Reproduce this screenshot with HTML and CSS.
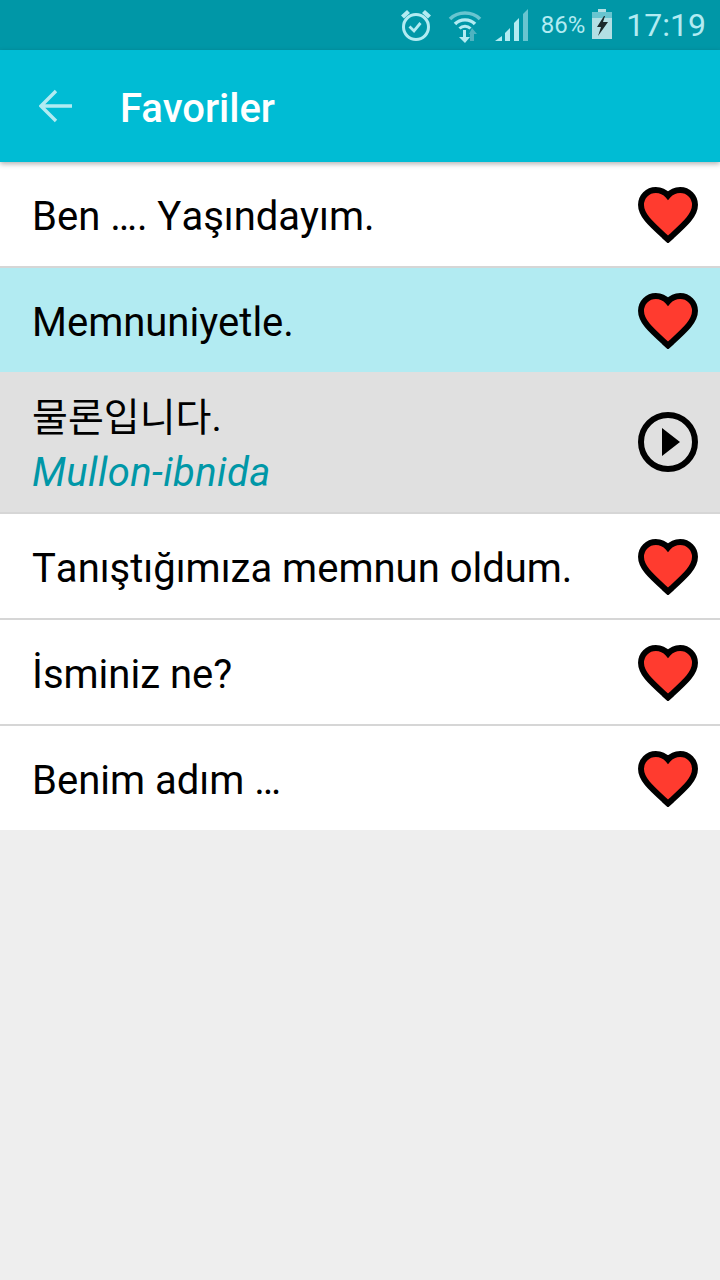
FILE: index.html
```html
<!DOCTYPE html>
<html lang="tr">
<head>
<meta charset="utf-8">
<title>Favoriler</title>
<link rel="stylesheet" href="styles.css">
</head>
<body>
<svg class="defs" width="0" height="0" aria-hidden="true">
  <symbol id="heart" viewBox="0.9 1.9 22.2 20.74"><path d="M12 21.35l-1.45-1.32C5.4 15.36 2 12.28 2 8.500 2 5.420 4.420 3 7.500 3c1.740 0 3.410.81 4.500 2.090C13.090 3.810 14.760 3 16.500 3 19.580 3 22 5.420 22 8.500c0 3.780-3.400 6.860-8.550 11.540L12 21.350z" fill="#ff3b2f" stroke="#000" stroke-width="2.200"/></symbol>
</svg>
<div class="status">
  <svg class="ic-alarm" width="32" height="32" viewBox="0 0 32 32" fill="none" stroke="#b2ebf2" stroke-width="3"><circle cx="16" cy="18" r="12.500"/><path d="M9.500 17.500l4.500 4.500 6.500-8" stroke-width="2.800"/><path d="M2.500 8L8.500 2.500M29.500 8L23.500 2.500" stroke-width="4.400"/></svg>
  <svg class="ic-wifi" width="34" height="36" viewBox="0 0 34 36" fill="none"><path d="M2 12C10 4 24 4 32 12" stroke="#68c5d0" stroke-width="3.600"/><path d="M7 17C12 11.500 22 11.500 27 17" stroke="#b2ebf2" stroke-width="3.400"/><path d="M11.500 21.500C14.500 18.500 19.500 18.500 22.500 21.500" stroke="#b2ebf2" stroke-width="3"/><path d="M15 23v7h-4l6 6 5-6h-4v-7z" fill="#b2ebf2"/><path d="M24 21l5 6h-3v7h-4v-7h-1z" fill="#4fb3c0"/></svg>
  <svg class="ic-signal" width="34" height="34" viewBox="0 0 34 34"><path d="M0 33l7-5v5z" fill="#b2ebf2"/><path d="M10 33v-8l5-5v13z" fill="#b2ebf2"/><path d="M19 33V15l5-5v23z" fill="#b2ebf2"/><path d="M28 33V6l5-5v32z" fill="#68c5d0"/></svg>
  <span class="pct">86%</span>
  <svg class="ic-batt" width="20" height="30" viewBox="0 0 20 30"><path d="M6 0h8v3h6v27H0V3h6z" fill="#b2dfe4"/><path d="M0 3h20v6H0z" fill="#68c5d0"/><path d="M12 7L5 18h4l-3 9 10-14h-5l2-6z" fill="#1c2a2c"/></svg>
  <span class="time">17:19</span>
</div>
<header class="bar">
  <svg class="back" width="34" height="34" viewBox="0 0 34 34" fill="none" stroke="#b2ebf2" stroke-width="3.400"><path d="M33 17H3M17 2L2 17 17 32"/></svg>
  <h1 class="title">Favoriler</h1>
</header>
<main class="list">
  <div class="row"><span class="txt">Ben …. Yaşındayım.</span><svg class="heart" width="60" height="56"><use href="#heart"/></svg></div>
  <div class="row r-sel"><span class="txt">Memnuniyetle.</span><svg class="heart" width="60" height="56"><use href="#heart"/></svg></div>
  <div class="row r-open"><div class="stack"><span class="ko">물론입니다.</span><span class="rom">Mullon-ibnida</span></div><svg class="play" width="60" height="60" viewBox="0 0 60 60"><circle cx="30" cy="30" r="27" fill="none" stroke="#000" stroke-width="6"/><path d="M24 16l18 14-18 14z"/></svg></div>
  <div class="row"><span class="txt">Tanıştığımıza memnun oldum.</span><svg class="heart" width="60" height="56"><use href="#heart"/></svg></div>
  <div class="row"><span class="txt">İsminiz ne?</span><svg class="heart" width="60" height="56"><use href="#heart"/></svg></div>
  <div class="row r-last"><span class="txt">Benim adım …</span><svg class="heart" width="60" height="56"><use href="#heart"/></svg></div>
</main>
</body>
</html>
```

FILE: styles.css
```css
html, body {
  margin: 0;
  padding: 0;
  height: 1280px;
  overflow: hidden;
  background: #eeeeee;
  font-family: Roboto, "Noto Sans CJK KR", sans-serif;
}
.defs { display: block; }
.status {
  height: 50px;
  background: #0097a7;
  display: flex;
  align-items: center;
  justify-content: flex-end;
  padding-right: 14px;
  box-sizing: border-box;
  color: #b2ebf2;
}
.ic-alarm { margin-right: 16px; }
.ic-wifi { margin-right: 13px; }
.ic-signal { margin-right: 12px; }
.pct { font-size: 24px; margin-right: 7px; }
.ic-batt { margin-right: 14px; margin-bottom: 2px; }
.time { font-size: 32px; }
.bar {
  height: 112px;
  background: #00bcd4;
  display: flex;
  align-items: center;
  padding: 4px 0 0 39px;
  box-sizing: border-box;
  position: relative;
  box-shadow: 0 2px 5px rgba(0, 0, 0, 0.3);
}
.back { margin: 0 47px 4px 0; }
.title {
  margin: 0;
  font-size: 40px;
  font-weight: 500;
  color: #fff;
}
.row {
  display: flex;
  align-items: center;
  justify-content: space-between;
  height: 106px;
  box-sizing: border-box;
  padding: 0 22px 0 32px;
  background: #fff;
  border-bottom: 2px solid #d6d6d6;
  font-kerning: none;
}
.r-sel { height: 104px; background: #b2ebf2; border-bottom: 0; }
.r-open { height: 142px; background: #e0e0e0; }
.r-last { height: 104px; border-bottom: 0; }
.heart { margin-top: 2px; }
.txt { font-size: 40px; color: #000; padding-top: 4px; }
.stack { display: flex; flex-direction: column; padding-top: 8px; }
.ko { font-size: 39px; color: #000; line-height: 53px; }
.rom { font-size: 40px; font-style: italic; color: #0097a7; line-height: 56px; letter-spacing: 0.4px; }
```
